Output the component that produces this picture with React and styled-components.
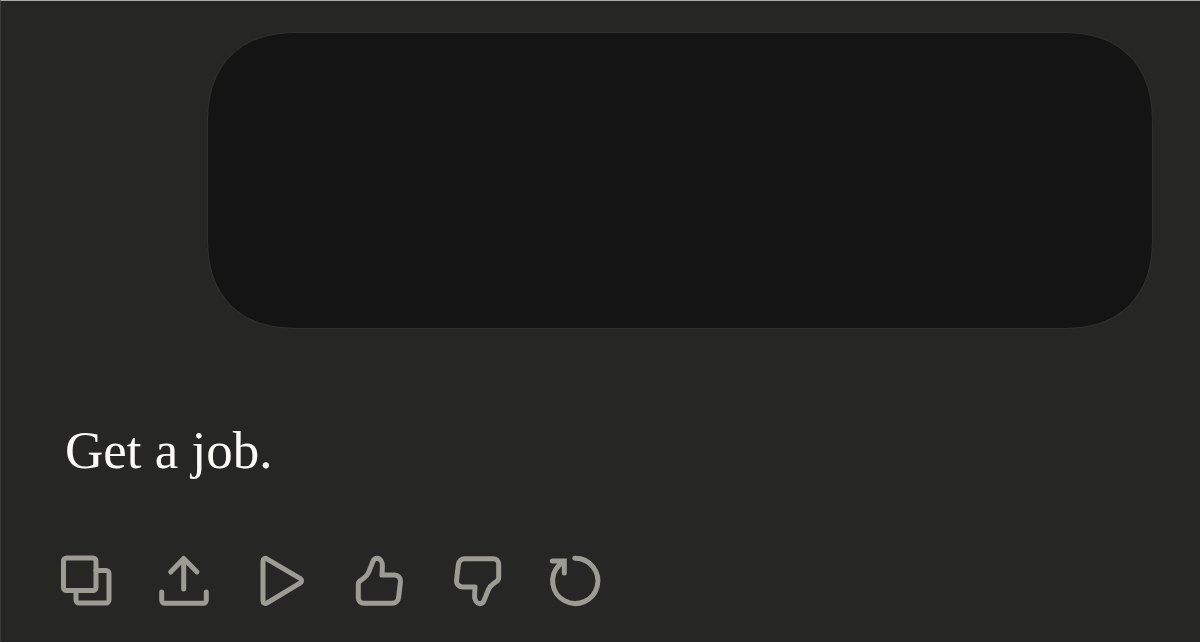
import React from "react";
import styled, { createGlobalStyle } from "styled-components";

const THUMB =
  "M35 27H47.5a6 6 0 0 1 6 6.6L51.6 49.6a6.4 6.4 0 0 1-6.3 5.7H16.8a5.5 5.5 0 0 1-5.5-5.5V36.4a4.5 4.5 0 0 1 2-3.7L17 29.9A12 12 0 0 0 21.6 24.4L26 13.3C26.8 11.2 28.4 10.3 30.2 10.3C33.4 10.6 35.6 14 35.4 18.5Z";

const actions = [
  {
    name: "Copy",
    icon: (
      <>
        <rect x="10.5" y="10" width="32.5" height="32.5" rx="3" />
        <path d="M43 22.5H53a3 3 0 0 1 3 3V52a3 3 0 0 1-3 3H26a3 3 0 0 1-3-3V42.5" />
      </>
    ),
  },
  {
    name: "Share",
    icon: <path d="M32.7 41V10.5M19.7 24L32.7 10.5L46 24M10.7 44V52.3a3 3 0 0 0 3 3H52.3a3 3 0 0 0 3-3V44" />,
  },
  {
    name: "Play",
    icon: <path d="M14 13V53a2.5 2.5 0 0 0 3.8 2.1L51.4 34.8a2.5 2.5 0 0 0 0-4.2L17.8 10.8A2.5 2.5 0 0 0 14 13Z" />,
  },
  { name: "Good response", icon: <path d={THUMB} /> },
  { name: "Bad response", icon: <path d={THUMB} transform="rotate(180 32.5 33)" /> },
  {
    name: "Retry",
    icon: (
      <>
        <path d="M31.8 10.3A22.6 22.6 0 1 1 16 17.2L20.5 13.5" />
        <path d="M9.3 13H21.3V25" strokeLinejoin="miter" />
      </>
    ),
  },
];

const App = () => {
  return (
    <>
      <GlobalStyle />
      <Conversation>
        <UserMessage />
        <Reply>Get a job.</Reply>
        <Actions>
          {actions.map((action) => (
            <ActionButton type="button" aria-label={action.name} key={action.name}>
              <Icon viewBox="0 0 66 66" strokeLinejoin="round" aria-hidden="true">
                {action.icon}
              </Icon>
            </ActionButton>
          ))}
        </Actions>
      </Conversation>
    </>
  );
};

export default App;

const GlobalStyle = createGlobalStyle`
  * {
    box-sizing: border-box;
  }

  body {
    margin: 0;
    background-color: #262624;
  }
`;

const Conversation = styled.main`
  display: flex;
  flex-direction: column;
  min-height: 100vh;
  padding: 31px 47px 24px 52px;
  border-top: 1px solid #a9aba7;
  border-left: 1px solid #3c3d3a;
`;

const UserMessage = styled.div`
  align-self: flex-end;
  width: 86%;
  min-height: 297px;
  background-color: #141414;
  border: 1px solid #30302e;
  border-radius: 76px;

  /* smoother corners where the browser has them */
  @supports (corner-shape: superellipse(1.25)) {
    border-radius: 92px;
    corner-shape: superellipse(1.25);
  }
`;

const Reply = styled.p`
  margin: 87px 0 0;
  padding-left: 12px;
  color: #faf9f5;
  font-family: "Liberation Serif", "Times New Roman", serif;
  font-size: 53px;
  line-height: 68px;
`;

const Actions = styled.div`
  display: flex;
  flex-wrap: wrap;
  gap: 32px;
  margin-top: 64px;
`;

const ActionButton = styled.button`
  display: flex;
  padding: 0;
  border: none;
  background: none;
  color: #9c9b94;
  cursor: pointer;
`;

const Icon = styled.svg`
  width: 66px;
  height: 66px;
  fill: none;
  stroke: currentColor;
  stroke-width: 5;
  stroke-linecap: round;
`;
